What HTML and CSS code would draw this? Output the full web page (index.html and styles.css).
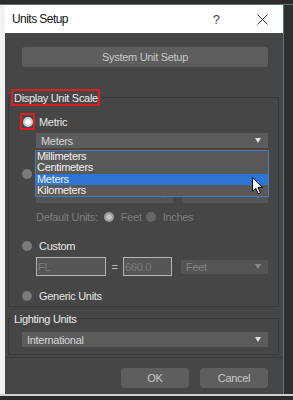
FILE: index.html
```html
<!DOCTYPE html>
<html>
<head>
<meta charset="utf-8">
<link rel="stylesheet" href="styles.css">
</head>
<body>
<div class="screen">
  <div class="top-strip"></div>
  <div class="mid">
    <div class="left-strip"></div>
    <div class="dialog">
      <div class="titlebar">
        <span class="title">Units Setup</span>
        <span class="help">?</span>
        <svg class="close" width="11" height="11" viewBox="0 0 11 11"><path d="M0.5 0.5 L10.5 10.5 M10.5 0.5 L0.5 10.5" stroke="#333" stroke-width="1" fill="none"/></svg>
      </div>
      <div class="body">
        <div class="btn wide">System Unit Setup</div>

        <div class="group scale">
          <div class="legend red">Display Unit Scale</div>

          <div class="row metric-row">
            <span class="radio-box"><span class="radio on"></span></span>
            <span class="lbl">Metric</span>
          </div>

          <div class="select-wrap">
            <div class="select metric-select"><span>Meters</span><span class="arrow"></span></div>
            <div class="popup">
              <div class="item">Millimeters</div>
              <div class="item">Centimeters</div>
              <div class="item sel">Meters</div>
              <div class="item">Kilometers</div>
              <svg class="cursor" width="12" height="18" viewBox="0 0 12 18"><path d="M0.5 0.5 L0.5 14.5 L3.8 11.3 L6.2 16.8 L8.4 15.8 L6 10.4 L10.6 10.4 Z" fill="#fff" stroke="#000" stroke-width="1" stroke-linejoin="round"/></svg>
            </div>
          </div>

          <div class="row imperial-row">
            <span class="radio off"></span>
          </div>

          <div class="imperial-selects">
            <div class="select dis imp1"><span class="arrow dim"></span></div>
            <div class="select dis imp2"><span class="arrow dim"></span></div>
          </div>

          <div class="row default-row">
            <span class="dis-text">Default Units:</span>
            <span class="radio dis-on"></span>
            <span class="dis-text">Feet</span>
            <span class="radio dis-off"></span>
            <span class="dis-text">Inches</span>
          </div>

          <div class="row custom-row">
            <span class="radio off"></span>
            <span class="lbl">Custom</span>
          </div>

          <div class="custom-inputs">
            <div class="input in1">FL</div>
            <span class="eq">=</span>
            <div class="input in2">660.0</div>
            <div class="select dis feet"><span>Feet</span><span class="arrow dim"></span></div>
          </div>

          <div class="row generic-row">
            <span class="radio off"></span>
            <span class="lbl">Generic Units</span>
          </div>
        </div>

        <div class="group lighting">
          <div class="legend plain">Lighting Units</div>
          <div class="select intl"><span>International</span><span class="arrow"></span></div>
        </div>

        <div class="separator"></div>

        <div class="buttons">
          <div class="btn small">OK</div>
          <div class="btn small">Cancel</div>
        </div>
      </div>
    </div>
    <div class="right-strip"></div>
  </div>
  <div class="bottom-strip"></div>
</div>
</body>
</html>
```

FILE: styles.css
```css
* { box-sizing: border-box; margin: 0; padding: 0; }
html, body {
  width: 293px;
  height: 400px;
  overflow: hidden;
  background: #2e2e2e;
}
body {
  font-family: "Liberation Sans", Arial, sans-serif;
  font-size: 11px;
  letter-spacing: -0.3px;
  color: #e4e4e4;
}
.screen { display: flex; flex-direction: column; height: 400px; }
.top-strip {
  height: 5px;
  background: #2b2b2b;
  border-bottom: 1px solid #5f7280;
}
.mid { display: flex; height: 389px; }
.left-strip { width: 5px; background: #f2f2f2; }
.right-strip {
  width: 10px;
  background: #2f2f2f;
  border-left: 1px solid #5a7484;
}
.bottom-strip {
  height: 6px;
  background: #2b2b2b;
  border-top: 2px solid #cfcfcf;
}
.dialog { width: 278px; display: flex; flex-direction: column; }

.titlebar {
  height: 28px;
  background: #ffffff;
  display: flex;
  align-items: center;
  padding-left: 7px;
  color: #111;
}
.title { font-size: 12px; letter-spacing: -0.55px; flex: 1; }
.help { font-size: 13px; color: #444; margin-right: 37px; letter-spacing: 0; }
.close { margin-right: 15px; }

.body {
  height: 361px;
  background: #464646;
  display: flex;
  flex-direction: column;
}

.btn {
  background: #5e5e5e;
  border-radius: 3px;
  color: #c9c9c9;
  display: flex;
  align-items: center;
  justify-content: center;
  height: 20px;
}
.btn.wide { margin: 14px 0 0 17px; width: 246px; }

.group {
  border: 1px solid #393939;
  margin-left: 3px;
  width: 271px;
  display: flex;
  flex-direction: column;
}
.group.scale { margin-top: 30px; padding-bottom: 4px; }
.group.lighting { margin-top: 11px; padding-bottom: 7px; }

.legend {
  background: #464646;
  align-self: flex-start;
  display: flex;
  align-items: center;
  color: #ececec;
}
.legend.red {
  margin: -9px 0 0 2px;
  height: 17px;
  width: 89px;
  border: 2px solid #dd1f1f;
  padding-left: 1px;
}
.legend.plain {
  margin: -7px 0 0 3px;
  height: 14px;
  padding: 0 2px;
}

.row { display: flex; align-items: center; height: 12px; }
.lbl { color: #e8e8e8; }
.metric-row { margin: 7px 0 0 11px; height: 17px; }
.radio-box {
  width: 15px;
  height: 17px;
  border: 2px solid #dd1f1f;
  display: flex;
  align-items: center;
  justify-content: center;
  margin-right: 4px;
}
.radio { width: 10px; height: 10px; border-radius: 50%; flex: none; }
.radio.on { background: radial-gradient(circle, #ffffff 0 2.5px, #cfcfcf 3px); }
.radio.off { background: #7a7a7a; }
.radio.dis-on { background: radial-gradient(circle, #c2c2c2 0 2.5px, #9c9c9c 3px); }
.radio.dis-off { background: #666666; }

.imperial-row, .custom-row, .generic-row { margin-left: 13px; }
.imperial-row .radio, .custom-row .radio, .generic-row .radio { margin-right: 7px; }

.select {
  height: 15px;
  background: #5c5c5c;
  display: flex;
  align-items: center;
  justify-content: space-between;
  padding: 0 7px 0 5px;
  color: #d6d6d6;
}
.arrow {
  width: 0;
  height: 0;
  border-left: 3.5px solid transparent;
  border-right: 3.5px solid transparent;
  border-top: 5px solid #e0e0e0;
}
.arrow.dim { border-top-color: #8a8a8a; }
.select.dis { background: #545454; color: #7a7a7a; justify-content: flex-end; }

.select-wrap { position: relative; margin: 3px 0 0 27px; width: 232px; }
.popup {
  position: absolute;
  top: 17px;
  left: -1px;
  width: 234px;
  height: 47px;
  border: 1px solid #4b79b2;
  background: #595959;
  z-index: 5;
}
.item {
  height: 11.25px;
  line-height: 11.25px;
  padding-left: 1px;
  color: #f2f2f2;
}
.item.sel { background: #2f75d6; }
.cursor { position: absolute; left: 216px; top: 26px; }

.imperial-row { margin-top: 20px; }
.imperial-selects { display: flex; margin: 8px 0 0 27px; gap: 9px; }
.imp1 { width: 137px; }
.imp2 { width: 86px; }

.default-row { margin: 8px 0 0 27px; gap: 0; }
.dis-text { color: #7e7e7e; }
.default-row .radio.dis-on { margin: 0 7px 0 6px; }
.default-row .radio.dis-off { margin: 0 7px 0 4px; }

.custom-row { margin-top: 17px; }
.custom-inputs { display: flex; align-items: center; margin: 5px 0 0 27px; height: 19px; }
.input {
  height: 19px;
  border: 1px solid #b4b4b4;
  background: #555555;
  color: #7c7c7c;
  padding-left: 1px;
  display: flex;
  align-items: center;
}
.in1 { width: 70px; }
.eq { color: #bdbdbd; width: 17px; text-align: center; }
.in2 { width: 49px; }
.select.feet { width: 87px; height: 14px; margin-left: 9px; color: #858585; justify-content: space-between; }

.generic-row { margin-top: 14px; }

.select.intl { margin: 6px 0 0 13px; width: 246px; }

.separator { height: 1px; background: #393939; margin-top: 2px; }

.buttons { display: flex; justify-content: flex-end; gap: 11px; margin: 10px 15px 0 0; }
.btn.small { width: 68px; border-radius: 4px; }
```
